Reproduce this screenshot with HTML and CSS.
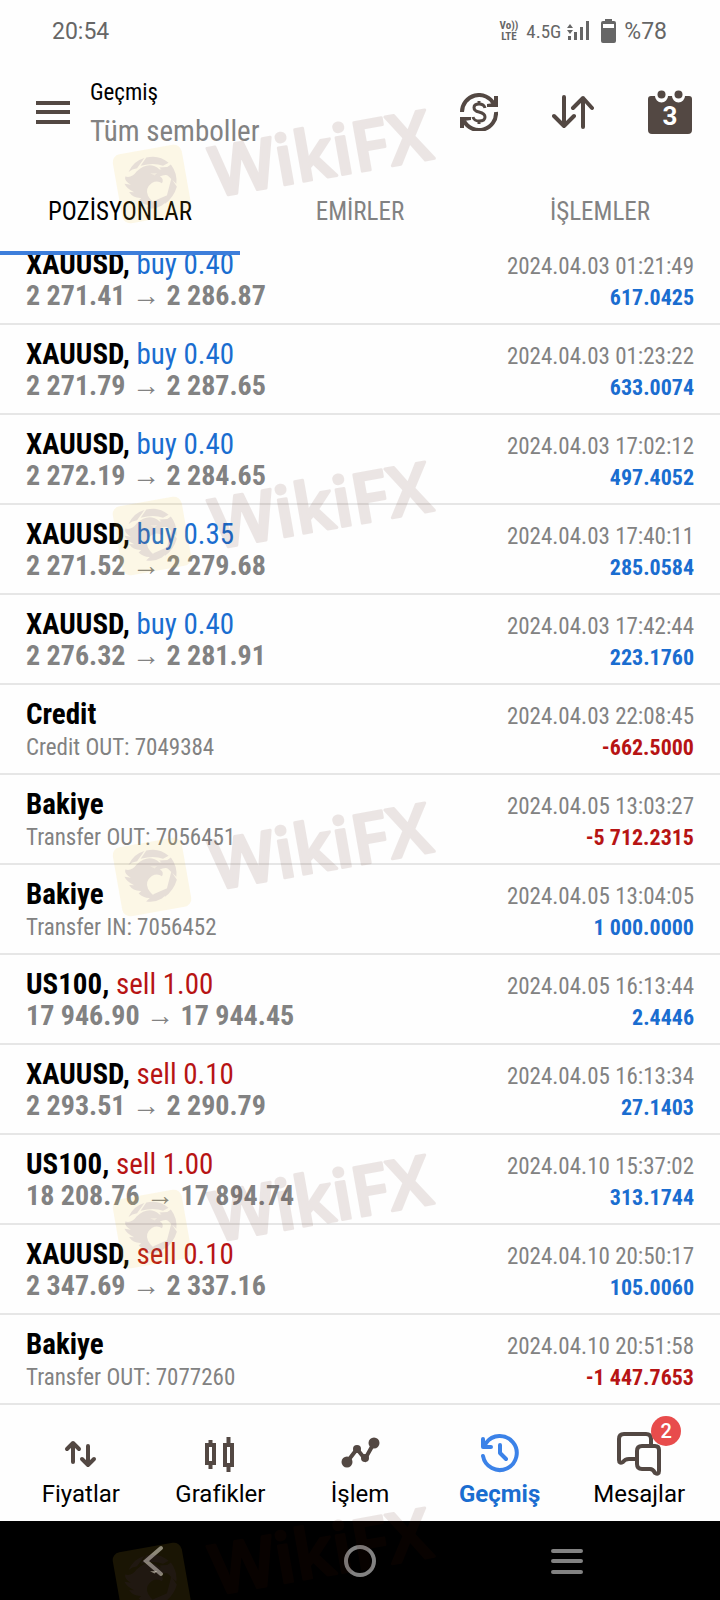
FILE: index.html
```
<!DOCTYPE html>
<html lang="tr">
  <head>
    <meta charset="UTF-8">
    <meta name="viewport" content="width=device-width, initial-scale=1">
    <title>Geçmiş</title>
    <link rel="stylesheet" href="styles.css">
  </head>
  <body>
    <div class="app">
      <div class="status">
        <span class="status__time">20:54</span>
        <div class="status__icons">
          <span class="status__lte"><span>Vo))</span><span>LTE</span></span>
          <span class="status__net">4.5G</span>
          <svg class="status__signal" width="22" height="20" viewBox="0 0 22 20">
            <path d="M0 7l3-4 3 4zM0 9l3 4 3-4zM1 15h3v4H1zM7 11h3v8H7zM13 6h3v13h-3zM19 0h3v19h-3z"/>
          </svg>
          <svg class="status__battery" width="15" height="24" viewBox="0 0 15 24">
            <path fill-rule="evenodd" d="M4 0h7v2h2q2 0 2 2v18q0 2-2 2H2q-2 0-2-2V4q0-2 2-2h2zM2 5v4h11V5z"/>
          </svg>
          <span class="status__charge">%78</span>
        </div>
      </div>
      <header class="header">
        <button class="icon-button" type="button" aria-label="Menü">
          <svg width="34" height="24" viewBox="0 0 34 24"><path d="M0 3h34M0 12h34M0 22h34" stroke-width="4"/></svg>
        </button>
        <div class="header__title">
          <h1>Geçmiş</h1>
          <p>Tüm semboller</p>
        </div>
        <div class="header__actions">
          <button class="icon-button" type="button" aria-label="Para birimi">
            <svg width="38" height="38" viewBox="0 0 38 38">
              <path d="M2 19A17 17 0 0 1 34 11M36 19A17 17 0 0 1 4 28" stroke-width="4"/>
              <path class="fill" d="M38 3v11H27v-3l7-1V3zM0 35V24h11v3l-7 1v7z"/>
              <path d="M25 15Q24 11 19 11Q14 11 14 14.500Q14 18 19 19Q25 20.500 25 24Q25 28 19 28Q14 28 13 24M19 8v3M19 27v4" stroke-width="3"/>
            </svg>
          </button>
          <button class="icon-button" type="button" aria-label="Sırala">
            <svg width="42" height="34" viewBox="0 0 42 34">
              <path d="M12 2v29M2 21l10 10 10-10M31 32V3M21 13L31 3l9 10" stroke-width="4" stroke-linecap="round" stroke-linejoin="round"/>
            </svg>
          </button>
          <button class="icon-button icon-button--date" type="button" aria-label="Tarih">
            <svg width="44" height="44" viewBox="0 0 44 44">
              <path class="fill" d="M3 6h4a6.500 6.500 0 0 0 13 0h4a6.500 6.500 0 0 0 13 0h4q3 0 3 3v31q0 4-4 4H4q-4 0-4-4V9q0-3 3-3z"/>
              <circle class="fill" cx="13.500" cy="4.500" r="4"/><circle class="fill" cx="30.500" cy="4.500" r="4"/>
              <text x="22" y="35" text-anchor="middle">3</text>
            </svg>
          </button>
        </div>
      </header>
      <div class="tabs" role="tablist">
        <button class="tab tab--active" type="button" role="tab" aria-selected="true">POZİSYONLAR</button>
        <button class="tab" type="button" role="tab" aria-selected="false">EMİRLER</button>
        <button class="tab" type="button" role="tab" aria-selected="false">İŞLEMLER</button>
      </div>
      <main class="history">
        <ul class="deals">
          <li class="deal">
            <span class="deal__name"><b>XAUUSD,</b> <span class="buy">buy 0.40</span></span><time>2024.04.03 01:21:49</time>
            <span class="deal__price">2 271.41 <i>→</i> 2 286.87</span><span class="deal__profit">617.0425</span>
          </li>
          <li class="deal">
            <span class="deal__name"><b>XAUUSD,</b> <span class="buy">buy 0.40</span></span><time>2024.04.03 01:23:22</time>
            <span class="deal__price">2 271.79 <i>→</i> 2 287.65</span><span class="deal__profit">633.0074</span>
          </li>
          <li class="deal">
            <span class="deal__name"><b>XAUUSD,</b> <span class="buy">buy 0.40</span></span><time>2024.04.03 17:02:12</time>
            <span class="deal__price">2 272.19 <i>→</i> 2 284.65</span><span class="deal__profit">497.4052</span>
          </li>
          <li class="deal">
            <span class="deal__name"><b>XAUUSD,</b> <span class="buy">buy 0.35</span></span><time>2024.04.03 17:40:11</time>
            <span class="deal__price">2 271.52 <i>→</i> 2 279.68</span><span class="deal__profit">285.0584</span>
          </li>
          <li class="deal">
            <span class="deal__name"><b>XAUUSD,</b> <span class="buy">buy 0.40</span></span><time>2024.04.03 17:42:44</time>
            <span class="deal__price">2 276.32 <i>→</i> 2 281.91</span><span class="deal__profit">223.1760</span>
          </li>
          <li class="deal">
            <span class="deal__name"><b>Credit</b></span><time>2024.04.03 22:08:45</time>
            <span class="deal__comment">Credit OUT: 7049384</span><span class="deal__profit deal__profit--loss">-662.5000</span>
          </li>
          <li class="deal">
            <span class="deal__name"><b>Bakiye</b></span><time>2024.04.05 13:03:27</time>
            <span class="deal__comment">Transfer OUT: 7056451</span><span class="deal__profit deal__profit--loss">-5 712.2315</span>
          </li>
          <li class="deal">
            <span class="deal__name"><b>Bakiye</b></span><time>2024.04.05 13:04:05</time>
            <span class="deal__comment">Transfer IN: 7056452</span><span class="deal__profit">1 000.0000</span>
          </li>
          <li class="deal">
            <span class="deal__name"><b>US100,</b> <span class="sell">sell 1.00</span></span><time>2024.04.05 16:13:44</time>
            <span class="deal__price">17 946.90 <i>→</i> 17 944.45</span><span class="deal__profit">2.4446</span>
          </li>
          <li class="deal">
            <span class="deal__name"><b>XAUUSD,</b> <span class="sell">sell 0.10</span></span><time>2024.04.05 16:13:34</time>
            <span class="deal__price">2 293.51 <i>→</i> 2 290.79</span><span class="deal__profit">27.1403</span>
          </li>
          <li class="deal">
            <span class="deal__name"><b>US100,</b> <span class="sell">sell 1.00</span></span><time>2024.04.10 15:37:02</time>
            <span class="deal__price">18 208.76 <i>→</i> 17 894.74</span><span class="deal__profit">313.1744</span>
          </li>
          <li class="deal">
            <span class="deal__name"><b>XAUUSD,</b> <span class="sell">sell 0.10</span></span><time>2024.04.10 20:50:17</time>
            <span class="deal__price">2 347.69 <i>→</i> 2 337.16</span><span class="deal__profit">105.0060</span>
          </li>
          <li class="deal">
            <span class="deal__name"><b>Bakiye</b></span><time>2024.04.10 20:51:58</time>
            <span class="deal__comment">Transfer OUT: 7077260</span><span class="deal__profit deal__profit--loss">-1 447.7653</span>
          </li>
        </ul>
      </main>
      <nav class="nav">
        <a class="nav__link" href="#">
          <svg width="46" height="46" viewBox="0 0 46 46"><path d="M15 32V13M9 19l6-6 6 6M30 16v19M24 29l6 6 6-6" stroke-width="4" stroke-linecap="round" stroke-linejoin="round"/></svg>
          Fiyatlar
        </a>
        <a class="nav__link" href="#">
          <svg width="46" height="46" viewBox="0 0 46 46"><path d="M10 15h7v18h-7zM28 15h7v20h-7z" stroke-width="4"/><path d="M13.500 10v4M13.500 34v5M31.500 7v7M31.500 36v6" stroke-width="4"/></svg>
          Grafikler
        </a>
        <a class="nav__link" href="#">
          <svg width="46" height="46" viewBox="0 0 46 46"><path d="M10 32l10-13 8 10 9-16" stroke-width="4"/><circle class="fill" cx="10" cy="32" r="5.500"/><circle class="fill" cx="20" cy="19" r="4"/><circle class="fill" cx="28" cy="28" r="4"/><circle class="fill" cx="37" cy="13" r="5.500"/></svg>
          İşlem
        </a>
        <a class="nav__link nav__link--active" href="#">
          <svg width="46" height="46" viewBox="0 0 46 46"><path d="M6 26a17 17 0 1 0 3-13L7 17M6 9v8h8M23 15v8l6 6" stroke-width="4" stroke-linecap="round" stroke-linejoin="round"/></svg>
          Geçmiş
        </a>
        <a class="nav__link" href="#">
          <span class="nav__icon">
            <svg width="46" height="46" viewBox="0 0 46 46"><path d="M35 14V9q0-5-5-5H8Q3 4 3 9v21q0 4 4 2 2-3 6-3h7M26 16h13q4 0 4 4v21q0 4-4 2-2-4-5-4h-8q-5 0-5-5V21q0-5 5-5z" stroke-width="4" stroke-linejoin="round"/></svg>
            <span class="badge">2</span>
          </span>
          Mesajlar
        </a>
      </nav>
      <div class="system">
        <button type="button" aria-label="Geri"><svg width="34" height="34" viewBox="0 0 34 34"><path d="M25 4L10 17l15 13"/></svg></button>
        <button type="button" aria-label="Ana ekran"><svg width="34" height="34" viewBox="0 0 34 34"><circle cx="17" cy="17" r="14"/></svg></button>
        <button type="button" aria-label="Son uygulamalar"><svg width="34" height="34" viewBox="0 0 34 34"><path d="M3 7h28M3 17h28M3 28h28"/></svg></button>
      </div>

      <div class="watermarks" aria-hidden="true">
        <svg width="0" height="0">
          <defs>
            <g id="mark">
              <g transform="rotate(-10 46 76)">
                <rect class="mark__tile" x="11" y="41" width="70" height="70" rx="8"/>
                <g class="mark__ink">
                  <path d="M25 60Q32 50 43 49L34 58Q29 58 25 60zM45 49Q58 48 66 58L60 60Q52 55 38 56zM68 60Q73 70 70 80L56 61L64 62zM70 83Q65 93 55 98L66 74zM52 99Q44 102 36 99L45 93L62 89Q58 96 52 99z"/>
                  <path d="M33 61Q47 52 56 63Q63 63 65 71Q60 68 55 70Q59 73 56 77Q52 73 46 75Q38 79 40 87Q42 93 46 96Q36 98 30 90L33 88Q25 87 22 80L27 81Q20 76 19 71L25 73Q19 68 21 64Q27 67 33 61z"/>
                </g>
                <path class="mark__eye" d="M46 65l7 1-3 2z"/>
              </g>
              <text class="mark__text" x="109" y="89" transform="rotate(-10 109 89)">WikiFX</text>
            </g>
          </defs>
        </svg>
        <svg class="watermark" style="top: 108px" viewBox="0 0 360 130"><use href="#mark"/></svg>
        <svg class="watermark" style="top: 460px" viewBox="0 0 360 130"><use href="#mark"/></svg>
        <svg class="watermark" style="top: 801px" viewBox="0 0 360 130"><use href="#mark"/></svg>
        <svg class="watermark" style="top: 1153px" viewBox="0 0 360 130"><use href="#mark"/></svg>
        <svg class="watermark" style="top: 1506px" viewBox="0 0 360 130"><use href="#mark"/></svg>
      </div>
    </div>
  </body>
</html>
```
FILE: styles.css
```
* {
  box-sizing: border-box;
}
body {
  margin: 0;
  background: #fefefe;
  color: #000;
  font-family: "Roboto Condensed", Roboto, sans-serif;
  font-size: 23px;
}
h1, p, ul {
  margin: 0;
  padding: 0;
}
button {
  border: none;
  background: none;
  padding: 0;
  font: inherit;
  color: inherit;
  cursor: pointer;
}
svg {
  display: block;
  fill: none;
  stroke: #534843;
}
.fill {
  fill: #534843;
  stroke: none;
}
.app {
  position: relative;
  min-height: 100vh;
  overflow: hidden;
  display: flex;
  flex-direction: column;
}

/* status bar */
.status {
  display: flex;
  justify-content: space-between;
  align-items: center;
  height: 62px;
  padding: 0 53px 0 52px;
  color: #666;
  font-family: Roboto, sans-serif;
}
.status svg {
  fill: #666;
  stroke: none;
}
.status__icons {
  display: flex;
  align-items: center;
}
.status__lte {
  display: flex;
  flex-direction: column;
  align-items: center;
  font-family: "Roboto Condensed", Roboto, sans-serif;
  font-size: 11px;
  font-weight: 700;
  line-height: 11px;
}
.status__net {
  margin: 0 6px 0 8px;
  font-family: "Roboto Condensed", Roboto, sans-serif;
  font-size: 19px;
}
.status__battery {
  margin: 0 8px 0 12px;
}

/* header */
.header {
  display: flex;
  align-items: center;
  height: 106px;
  padding: 0 28px 6px 36px;
}
.header__title {
  flex: 1;
  padding-left: 20px;
}
.header__title h1 {
  font-size: 23px;
  font-weight: 400;
  line-height: 38px;
}
.header__title p {
  color: #828282;
  font-size: 29px;
  line-height: 38px;
}
.header__actions {
  display: flex;
  align-items: center;
  gap: 54px;
}
.icon-button text {
  fill: #fff;
  stroke: none;
  font-family: Roboto, sans-serif;
  font-size: 26px;
  font-weight: 700;
}

/* tabs */
.tabs {
  display: grid;
  grid-template-columns: repeat(3, 1fr);
  height: 87px;
}
.tab {
  padding-top: 4px;
  border-bottom: 4px solid transparent;
  color: #828282;
  font-size: 25px;
}
.tab--active {
  border-color: #3d7edb;
  color: #000;
}

/* deals, scrolled a little under the tabs */
.history {
  flex: 1;
  overflow: hidden;
}
.deals {
  margin-top: -20px;
  list-style: none;
}
.deal {
  display: grid;
  grid-template-columns: 1fr auto;
  grid-template-rows: 32px 32px;
  align-items: baseline;
  height: 90px;
  padding: 13px 26px 0;
  border-bottom: 2px solid #e6e6e6;
  line-height: 32px;
}
.deal__name {
  font-size: 29px;
}
.buy {
  color: #1a6dd0;
}
.sell {
  color: #b71414;
}
.deal time {
  color: #828282;
  text-align: right;
}
.deal__price {
  color: #828282;
  font-size: 28px;
  font-weight: 700;
}
.deal__price i {
  font-family: Roboto, sans-serif;
  font-style: normal;
}
.deal__comment {
  color: #828282;
  line-height: 36px;
}
.deal__profit {
  color: #1a6dd0;
  font-size: 22px;
  font-weight: 700;
  line-height: 36px;
  text-align: right;
}
.deal__profit--loss {
  color: #b71414;
}

/* bottom navigation */
.nav {
  display: grid;
  grid-template-columns: repeat(5, 1fr);
  height: 116px;
  padding: 25px 11px 0;
}
.nav__link {
  display: flex;
  flex-direction: column;
  align-items: center;
  gap: 4px;
  color: #000;
  font-family: Roboto, sans-serif;
  font-size: 24px;
  line-height: 28px;
  text-decoration: none;
}
.nav__link--active {
  color: #1a6dd0;
  font-weight: 700;
}
.nav__link--active svg {
  stroke: #3b82e8;
}
.nav__icon {
  position: relative;
}
.badge {
  position: absolute;
  top: -14px;
  right: -19px;
  width: 30px;
  border-radius: 50%;
  background: #e84c4c;
  color: #fff;
  font-size: 20px;
  font-weight: 500;
  line-height: 30px;
  text-align: center;
}

/* android buttons */
.system {
  display: grid;
  grid-template-columns: repeat(3, 1fr);
  height: 79px;
  padding: 0 50px;
  background: #000;
}
.system svg {
  margin: 0 auto;
  stroke: #828282;
  stroke-width: 4;
  stroke-linecap: round;
}

/* watermarks lie over everything */
.watermarks {
  position: absolute;
  inset: 0;
  pointer-events: none;
}
.watermark {
  position: absolute;
  left: 106px;
  width: 360px;
  stroke: none;
}
.mark__tile {
  fill: #f0c020;
  opacity: 0.11;
}
.mark__ink {
  fill: #503070;
  opacity: 0.12;
}
.mark__eye {
  fill: #fdf7e6;
  opacity: 0.5;
}
.mark__text {
  fill: #501808;
  stroke: #501808;
  stroke-width: 3;
  stroke-linejoin: round;
  opacity: 0.1;
  font-family: "Open Sans", sans-serif;
  font-size: 69px;
  font-weight: 600;
}
```
